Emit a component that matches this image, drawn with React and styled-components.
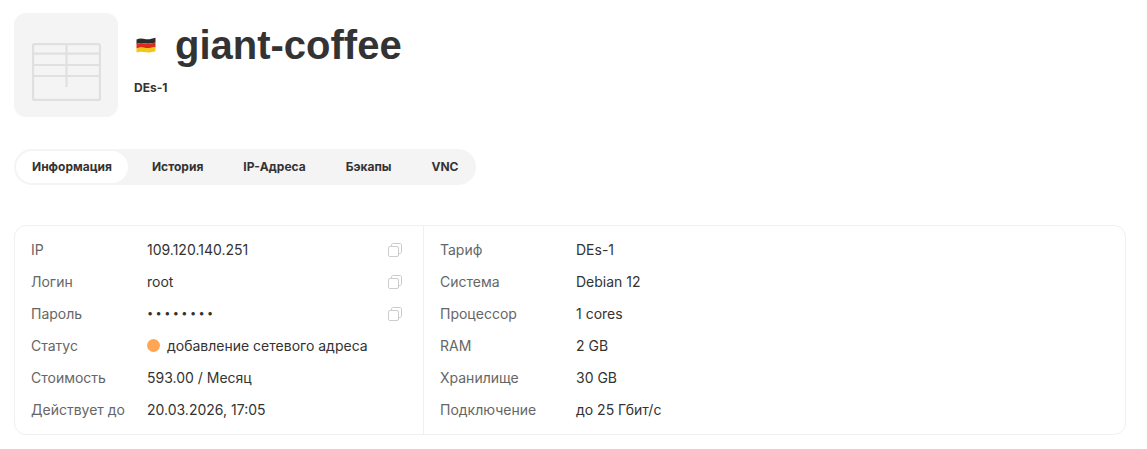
import styled, { createGlobalStyle } from "styled-components";

const GlobalStyle = createGlobalStyle`
  * {
    box-sizing: border-box;
  }
  body {
    margin: 0;
    background: #fff;
    font-family: "Inter", "Liberation Sans", sans-serif;
    color: #333;
  }
`;

const tabs = ["Информация", "История", "IP-Адреса", "Бэкапы", "VNC"];

const leftRows = [
  { label: "IP", value: "109.120.140.251", copy: true },
  { label: "Логин", value: "root", copy: true },
  { label: "Пароль", value: "••••••••", copy: true, secret: true },
  { label: "Статус", value: "добавление сетевого адреса", status: true },
  { label: "Стоимость", value: "593.00 / Месяц" },
  { label: "Действует до", value: "20.03.2026, 17:05" },
];

const rightRows = [
  { label: "Тариф", value: "DEs-1" },
  { label: "Система", value: "Debian 12" },
  { label: "Процессор", value: "1 cores" },
  { label: "RAM", value: "2 GB" },
  { label: "Хранилище", value: "30 GB" },
  { label: "Подключение", value: "до 25 Гбит/с" },
];

const ServerIcon = () => (
  <svg width="69" height="58" viewBox="0 0 69 58" fill="none" stroke="#e0e0e0" strokeWidth="2.2">
    <rect x="1.1" y="1.1" width="66.8" height="55.8" rx="1.5" />
    <path d="M1.1 10.7H67.9M1.1 22H67.9M1.1 33H67.9" />
    <path d="M34.5 1.1V44" />
  </svg>
);

const Flag = () => (
  <svg width="20" height="16" viewBox="0 0 20 16">
    <path d="M0.5 2.5C4 0.8 7 1.8 10 2.2C13 2.6 16 1.8 19.5 0.8V5.5C16 6.3 13 7 10 6.6C7 6.2 4 5.5 0.5 7Z" fill="#2c2c2c" />
    <path d="M0.5 7C4 5.5 7 6.2 10 6.6C13 7 16 6.3 19.5 5.5V10C16 10.8 13 11.4 10 11C7 10.6 4 10 0.5 11.5Z" fill="#dd2c1c" />
    <path d="M0.5 11.5C4 10 7 10.6 10 11C13 11.4 16 10.8 19.5 10V14.2C16 15 13 15.8 10 15.3C7 14.8 4 14.4 0.5 15.6Z" fill="#f5c518" />
  </svg>
);

const CopyIcon = () => (
  <svg width="14" height="14" viewBox="0 0 14 14" fill="none" stroke="#cccccc" strokeWidth="1">
    <rect x="0.5" y="3.5" width="10" height="10" rx="1.5" />
    <path d="M3.5 3.5V2C3.5 1.2 4.2 0.5 5 0.5H12C12.8 0.5 13.5 1.2 13.5 2V9C13.5 9.8 12.8 10.5 12 10.5H10.5" />
  </svg>
);

const InfoRow = ({ row, labelWidth }) => (
  <Row>
    <Label $width={labelWidth}>{row.label}</Label>
    <Value $secret={row.secret}>
      {row.status && <StatusDot />}
      {row.value}
    </Value>
    {row.copy && (
      <CopyButton type="button" aria-label="copy">
        <CopyIcon />
      </CopyButton>
    )}
  </Row>
);

const App = () => {
  return (
    <Page>
      <GlobalStyle />
      <Header>
        <Thumb>
          <ServerIcon />
        </Thumb>
        <HeaderText>
          <TitleRow>
            <Flag />
            <Title>giant-coffee</Title>
          </TitleRow>
          <Plan>DEs-1</Plan>
        </HeaderText>
      </Header>

      <Tabs>
        {tabs.map((tab, i) => (
          <Tab key={tab} $active={i === 0}>
            {tab}
          </Tab>
        ))}
      </Tabs>

      <Card>
        <LeftColumn>
          {leftRows.map((row) => (
            <InfoRow key={row.label} row={row} labelWidth={116} />
          ))}
        </LeftColumn>
        <RightColumn>
          {rightRows.map((row) => (
            <InfoRow key={row.label} row={row} labelWidth={136} />
          ))}
        </RightColumn>
      </Card>
    </Page>
  );
};

const Page = styled.div`
  width: 1147px;
  height: 449px;
  padding: 13px 21px 0 14px;
  overflow: hidden;
`;

const Header = styled.div`
  display: flex;
  gap: 16px;
`;

const Thumb = styled.div`
  display: flex;
  justify-content: center;
  width: 104px;
  height: 104px;
  padding-top: 30px;
  border-radius: 12px;
  background: #f4f4f4;
`;

const HeaderText = styled.div`
  display: flex;
  flex-direction: column;
`;

const TitleRow = styled.div`
  display: flex;
  align-items: center;
  gap: 19px;
  height: 64px;
  padding-left: 2px;
`;

const Title = styled.h1`
  margin: 0;
  font-family: "Liberation Sans", sans-serif;
  font-size: 40px;
  line-height: 48px;
  font-weight: 700;
  color: #333;
`;

const Plan = styled.div`
  margin-top: 3px;
  font-size: 12px;
  line-height: 16px;
  font-weight: 700;
  color: #333;
`;

const Tabs = styled.div`
  display: flex;
  align-items: center;
  width: 462px;
  height: 36px;
  margin-top: 32px;
  padding: 2px;
  border-radius: 18px;
  background: #f4f4f4;
`;

const Tab = styled.div`
  flex-shrink: 0;
  display: flex;
  align-items: center;
  height: 32px;
  padding: 0 16px 1px ${({ $active }) => ($active ? "16px" : "24px")};
  border-radius: 16px;
  font-size: 12px;
  font-weight: 700;
  white-space: nowrap;
  color: #333;
  background: ${({ $active }) => ($active ? "#fff" : "transparent")};
`;

const Card = styled.div`
  display: flex;
  height: 210px;
  margin-top: 40px;
  border: 1px solid #f0f0f0;
  border-radius: 12px;
`;

const LeftColumn = styled.div`
  flex: 0 0 409px;
  display: flex;
  flex-direction: column;
  padding: 7px 21px 8px 16px;
  border-right: 1px solid #f0f0f0;
`;

const RightColumn = styled.div`
  flex: 1;
  display: flex;
  flex-direction: column;
  padding: 7px 16px 8px;
`;

const Row = styled.div`
  display: flex;
  align-items: center;
  height: 32px;
  font-size: 14px;
`;

const Label = styled.div`
  flex: 0 0 ${({ $width }) => $width}px;
  color: #666;
`;

const Value = styled.div`
  flex: 1;
  display: flex;
  align-items: center;
  gap: 7px;
  color: #333;
  font-size: ${({ $secret }) => ($secret ? "11px" : "14px")};
  letter-spacing: ${({ $secret }) => ($secret ? "2.4px" : "0")};
`;

const StatusDot = styled.span`
  width: 13px;
  height: 13px;
  border-radius: 50%;
  background: #ffa655;
`;

const CopyButton = styled.button`
  display: flex;
  margin-top: 2px;
  padding: 0;
  border: 0;
  background: none;
`;

export default App;
